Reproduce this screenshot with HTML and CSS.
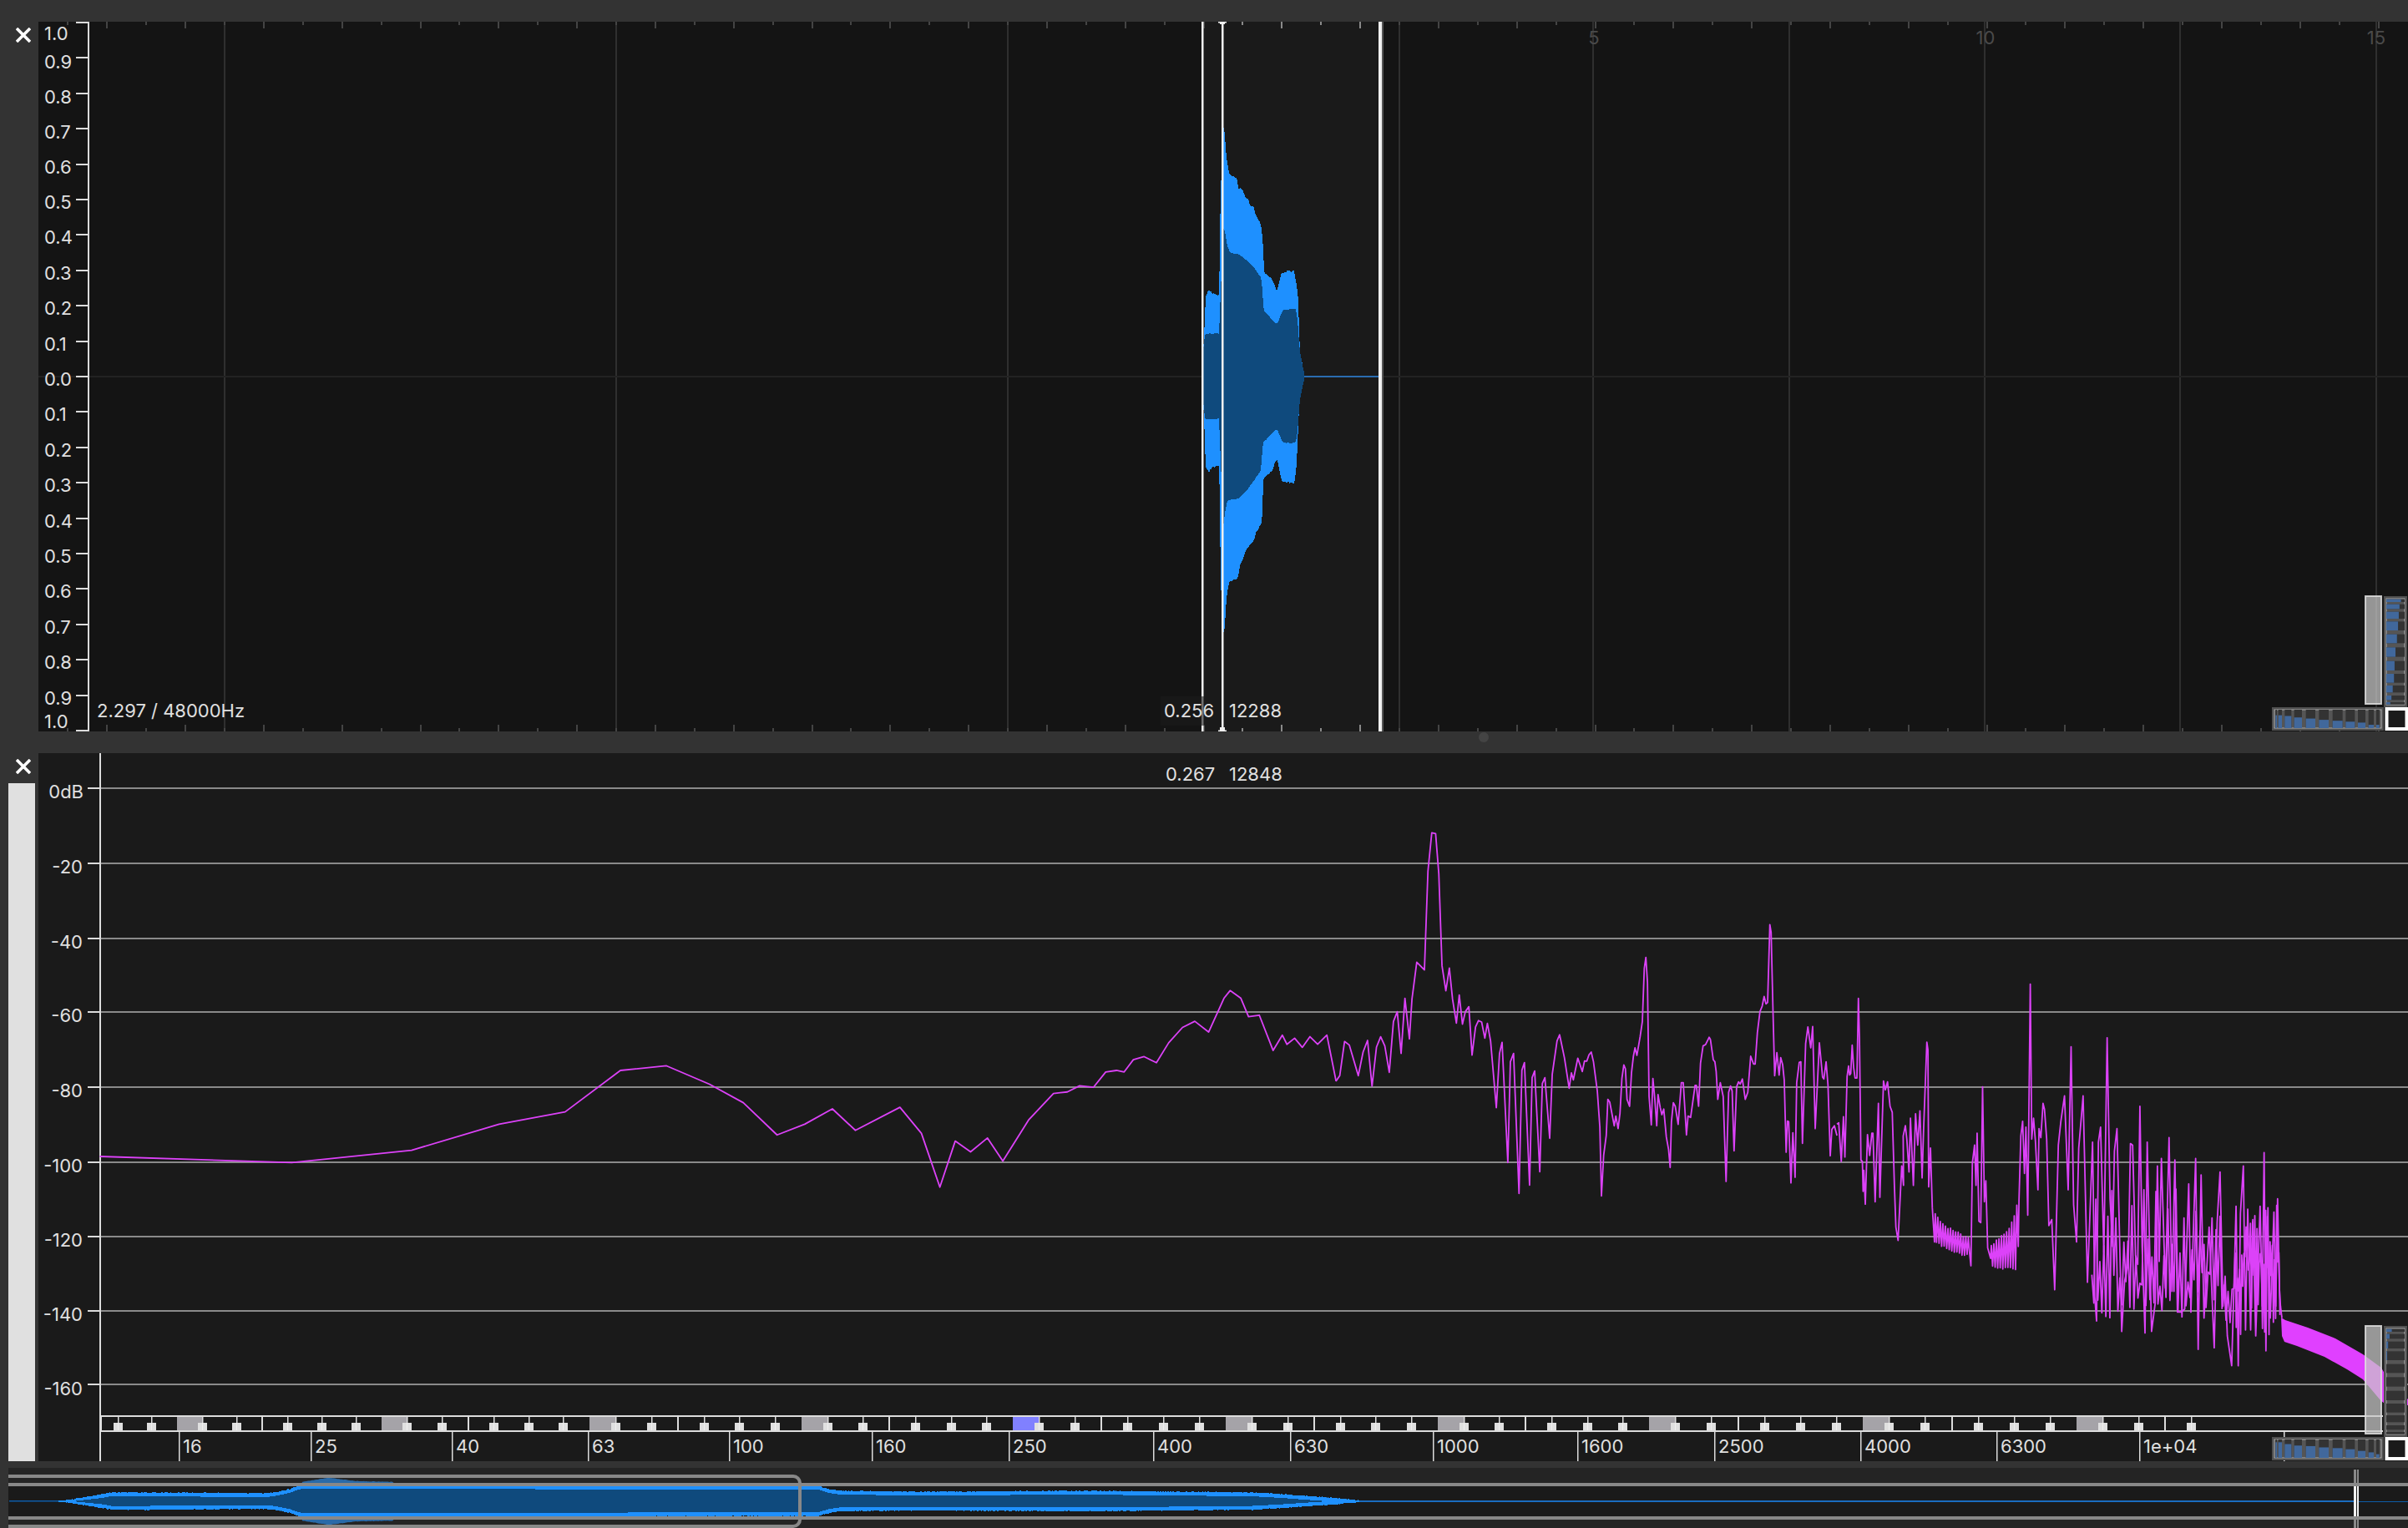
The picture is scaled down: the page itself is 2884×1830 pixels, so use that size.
FILE: index.html
```html
<!DOCTYPE html>
<html lang="en">
<head>
  <meta charset="UTF-8">
  <title>Audio Analyzer</title>
  <link rel="stylesheet" href="styles.css">
</head>
<body>
  <div class="app">
    <div class="topbar"></div>

    <section class="pane pane-wave">
      <div class="side">
        <svg class="close" viewBox="0 0 18 18"><path d="M1 1L17 17M17 1L1 17"/></svg>
      </div>
      <svg class="plot" viewBox="46 26 2838 850">
        <rect class="sel-bg" x="1441" y="26" width="210" height="850"/>
        <g id="waveGrid"></g>
        <g id="waveShape"></g>
        <rect class="mark" x="1439" y="26" width="2.5" height="850"/>
        <rect class="mark" x="1463" y="26" width="2.5" height="850"/>
        <path class="mark" d="M1459 26H1469V27.5H1467V29H1461V27.5H1459ZM1459 876H1469V874.5H1467V871H1461V874.5H1459Z"/>
        <rect class="mark" x="1651" y="26" width="4" height="850"/>
        <rect class="mark-dim" x="1655" y="26" width="2" height="850"/>

        <text class="lbl" x="53" y="48">1.0</text>
        <text class="lbl" x="53" y="82">0.9</text>
        <text class="lbl" x="53" y="124">0.8</text>
        <text class="lbl" x="53" y="166">0.7</text>
        <text class="lbl" x="53" y="208">0.6</text>
        <text class="lbl" x="53" y="250">0.5</text>
        <text class="lbl" x="53" y="292">0.4</text>
        <text class="lbl" x="53" y="335">0.3</text>
        <text class="lbl" x="53" y="377">0.2</text>
        <text class="lbl" x="53" y="420">0.1</text>
        <text class="lbl" x="53" y="462">0.0</text>
        <text class="lbl" x="53" y="504">0.1</text>
        <text class="lbl" x="53" y="547">0.2</text>
        <text class="lbl" x="53" y="589">0.3</text>
        <text class="lbl" x="53" y="632">0.4</text>
        <text class="lbl" x="53" y="674">0.5</text>
        <text class="lbl" x="53" y="716">0.6</text>
        <text class="lbl" x="53" y="759">0.7</text>
        <text class="lbl" x="53" y="801">0.8</text>
        <text class="lbl" x="53" y="844">0.9</text>
        <text class="lbl" x="53" y="872">1.0</text>

        <text class="lbl lbl-dim lbl-mid" x="1909" y="53">5</text>
        <text class="lbl lbl-dim lbl-mid" x="2378" y="53">10</text>
        <text class="lbl lbl-dim lbl-mid" x="2846" y="53">15</text>

        <text class="lbl" x="116" y="859">2.297 / 48000Hz</text>
        <rect class="readout-bg" x="1390" y="834" width="64" height="35"/>
        <text class="lbl" x="1394" y="859">0.256</text>
        <text class="lbl" x="1472" y="859">12288</text>
        <g id="waveMeter"></g>
      </svg>
    </section>

    <div class="divider"><span class="grip"></span></div>

    <section class="pane pane-spec">
      <div class="side">
        <svg class="close" viewBox="0 0 18 18"><path d="M1 1L17 17M17 1L1 17"/></svg>
        <div class="slider"></div>
      </div>
      <svg class="plot" viewBox="46 902 2838 848">
        <g id="specGrid"></g>
        <g id="specKeys"></g>
        <g id="specTrace"></g>

        <text class="lbl lbl-end" x="100" y="956">0dB</text>
        <text class="lbl lbl-end" x="99" y="1046">-20</text>
        <text class="lbl lbl-end" x="99" y="1136">-40</text>
        <text class="lbl lbl-end" x="99" y="1224">-60</text>
        <text class="lbl lbl-end" x="99" y="1314">-80</text>
        <text class="lbl lbl-end" x="99" y="1404">-100</text>
        <text class="lbl lbl-end" x="99" y="1493">-120</text>
        <text class="lbl lbl-end" x="99" y="1582">-140</text>
        <text class="lbl lbl-end" x="99" y="1671">-160</text>

        <text class="lbl" x="219" y="1740">16</text>
        <text class="lbl" x="377" y="1740">25</text>
        <text class="lbl" x="546" y="1740">40</text>
        <text class="lbl" x="709" y="1740">63</text>
        <text class="lbl" x="878" y="1740">100</text>
        <text class="lbl" x="1049" y="1740">160</text>
        <text class="lbl" x="1213" y="1740">250</text>
        <text class="lbl" x="1386" y="1740">400</text>
        <text class="lbl" x="1550" y="1740">630</text>
        <text class="lbl" x="1721" y="1740">1000</text>
        <text class="lbl" x="1894" y="1740">1600</text>
        <text class="lbl" x="2058" y="1740">2500</text>
        <text class="lbl" x="2233" y="1740">4000</text>
        <text class="lbl" x="2396" y="1740">6300</text>
        <text class="lbl" x="2567" y="1740">1e+04</text>

        <text class="lbl" x="1396" y="935">0.267</text>
        <text class="lbl" x="1472" y="935">12848</text>
        <g id="specMeter"></g>
      </svg>
    </section>

    <div class="gap"></div>

    <div class="overview">
      <svg class="plot" viewBox="10 1758 2874 72">
        <rect class="ov-band" x="10" y="1780" width="2874" height="36"/>
        <g id="ovShape"></g>
        <rect class="ov-line" x="10" y="1776" width="2874" height="4"/>
        <rect class="ov-line" x="10" y="1816" width="2874" height="4"/>
        <rect class="ov-frame" x="-20" y="1768" width="978" height="60" rx="8"/>
        <rect class="ov-mark" x="2819" y="1760" width="3" height="70"/>
        <rect class="ov-mark" x="2823" y="1760" width="2" height="70"/>
        <rect class="mark" x="2819" y="1780" width="3" height="36"/>
        <rect class="mark" x="2823" y="1780" width="2" height="36"/>
      </svg>
    </div>
  </div>

  <script src="plot.js"></script>
</body>
</html>
```

FILE: styles.css
```css
html, body {
  margin: 0;
  padding: 0;
  background: #333;
}
.app {
  display: flex;
  flex-direction: column;
  width: 2884px;
  height: 1830px;
  overflow: hidden;
  font-family: Inter, "Liberation Sans", sans-serif;
}
.topbar {
  height: 26px;
  background: #333;
}
.pane {
  display: flex;
}
.pane-wave {
  height: 850px;
  background: #141414;
}
.pane-spec {
  height: 848px;
  background: #1a1a1a;
}
.side {
  display: flex;
  flex-direction: column;
  width: 46px;
  flex-shrink: 0;
  background: #333;
}
.close {
  width: 18px;
  height: 18px;
  margin: 7px 0 0 19px;
  flex-shrink: 0;
}
.close path {
  fill: none;
  stroke: #fff;
  stroke-width: 3.6;
}
.slider {
  flex: 1;
  width: 32px;
  margin: 11px 0 0 10px;
  background: #e0e0e0;
}
.plot {
  display: block;
  flex: 1;
  width: 100%;
  height: 100%;
}
.divider {
  height: 26px;
  background: #333;
}
.grip {
  display: block;
  width: 12px;
  height: 12px;
  margin: 1px 0 0 1771px;
  border-radius: 50%;
  background: #444;
}
.gap {
  height: 8px;
  background: #333;
}
.overview {
  height: 72px;
  padding-left: 10px;
  background: #333;
}
.overview .plot {
  background: #242424;
}

/* plot pieces */
.lbl {
  font-family: Inter, "Liberation Sans", sans-serif;
  font-size: 22px;
  fill: #e0e0e0;
}
.lbl-dim {
  fill: #4a4a4a;
}
.lbl-mid {
  text-anchor: middle;
}
.lbl-end {
  text-anchor: end;
}
.sel-bg {
  fill: #1a1a1a;
}
.grid-v {
  fill: #2f2f2f;
}
.grid-zero {
  fill: #222;
}
.zero-blue {
  fill: #2a6cb0;
}
.tick-dim {
  fill: #444;
}
.tick-sel {
  fill: #8a8a8a;
}
.axis {
  fill: #dcdcdc;
}
.mark {
  fill: #f0f0f0;
}
.mark-dim {
  fill: #555;
}
.readout-bg {
  fill: rgba(26, 26, 26, 0.6);
}
.wave-outer {
  fill: #1e90ff;
  shape-rendering: crispEdges;
}
.wave-inner {
  fill: #0f4a7d;
  shape-rendering: crispEdges;
}

.grid-h {
  fill: #8a8a8a;
}
.key-line {
  fill: #dcdcdc;
}
.key-octave {
  fill: #a5a3a8;
}
.key-active {
  fill: #8080ff;
}
.key-black {
  fill: #e0e0e0;
}
.trace {
  fill: none;
  stroke: #dc42f8;
  stroke-width: 1.8;
  stroke-linejoin: round;
  vector-effect: non-scaling-stroke;
}
.trace-fill {
  fill: #e040ff;
}

.thumb {
  fill: rgba(200, 200, 200, 0.72);
  stroke: rgba(222, 222, 222, 0.85);
  stroke-width: 2;
}
.meter-frame {
  fill: #555;
  stroke: #505050;
  stroke-width: 2;
}
.meter-inner {
  fill: none;
  stroke: #aaa;
  stroke-width: 1;
}
.meter-cell {
  fill: #333;
}
.meter-level {
  fill: #41689c;
}
.corner {
  fill: #1a1a1a;
  stroke: #fff;
  stroke-width: 4;
}

.ov-band {
  fill: #1a1a1a;
}
.ov-line {
  fill: #888;
}
.ov-frame {
  fill: none;
  stroke: #888;
  stroke-width: 4;
}
.ov-mark {
  fill: #888;
}
.ov-bulge {
  fill: #2a6aa8;
}
.ov-thin {
  fill: #0d5ba8;
}
.ov-thick {
  fill: #1a6cc0;
}
```

FILE: plot.js
```js
// repeatable bits of the three plots: ticks, keys, meters, wave and spectrum shapes
let seed = 7;
function rnd() {
  seed = (seed * 16807) % 2147483647;
  return seed / 2147483647;
}

function rect(cls, x, y, w, h) {
  return `<rect class="${cls}" x="${x}" y="${y}" width="${w}" height="${h}"/>`;
}

function valueAt(pts, x) {
  for (let i = 1; i < pts.length; i++) {
    if (x <= pts[i][0]) {
      const a = pts[i - 1], b = pts[i];
      const t = b[0] === a[0] ? 1 : (x - a[0]) / (b[0] - a[0]);
      return a[1] + (b[1] - a[1]) * t;
    }
  }
  return pts[pts.length - 1][1];
}

// filled band between two envelopes, stepped per pixel with a bit of noise
function band(top, bottom, x0, x1, noise) {
  let up = '', down = '';
  for (let x = x0; x <= x1; x += 1) {
    const a = valueAt(top, x) - rnd() * noise;
    const b = valueAt(bottom, x) + rnd() * noise;
    up += `${up ? 'L' : 'M'}${x} ${a.toFixed(1)}`;
    down = `L${x} ${b.toFixed(1)}` + down;
  }
  return up + down + 'Z';
}

function meterV(x, y, levels) {
  const rows = [[110,120],[128,145],[155,180],[190,222],[236,268],[283,317],[332,366],[378,410],[420,445],[456,472],[480,488]];
  let out = rect('meter-frame', x, y, 26, 131) + rect('meter-inner', x + 2, y + 2, 22, 127);
  rows.forEach((r, i) => {
    const cy = y + (r[0] - 102) / 3, ch = (r[1] - r[0]) / 3;
    out += rect('meter-cell', x + 2, cy, 22, ch);
    out += rect('meter-level', x + 2, cy, 22 * levels[i], ch);
  });
  return out;
}

function meterH(x, y, levels) {
  const cols = [[125,130],[135,148],[158,182],[192,220],[234,268],[281,316],[330,366],[377,410],[421,448],[459,478],[487,498]];
  let out = rect('meter-frame', x, y, 132, 26) + rect('meter-inner', x + 2, y + 2, 128, 22);
  cols.forEach((c, i) => {
    const cx = x + (c[0] - 115) / 3, cw = (c[1] - c[0]) / 3;
    const hi = 22 * levels[i];
    out += rect('meter-cell', cx, y + 2, cw, 22);
    out += rect('meter-level', cx, y + 24 - hi, cw, hi);
  });
  return out;
}

function cornerControls(top) {
  let out = rect('thumb', 2833, top + 1, 19, 129);
  out += rect('corner', 2858.5, top + 136, 24, 24);
  return out;
}

/* ---- waveform pane ---- */
function drawWave() {
  let grid = '';
  [268, 737, 1206, 1675, 1907, 2142, 2376, 2610, 2845].forEach(x => {
    grid += rect('grid-v', x, 26, 2, 850);
  });
  grid += rect('grid-zero', 46, 450, 2838, 2);
  for (let k = -4; k <= 55; k++) {
    const x = Math.round(268 + 46.9 * k);
    const tall = Math.abs(k % 2) === 1;
    const h = tall ? 8 : 4;
    const cls = x > 1441 && x < 1651 ? 'tick-sel' : 'tick-dim';
    grid += rect(cls, x, 26, 2, h) + rect(cls, x, 876 - h, 2, h);
  }
  // value axis
  grid += rect('axis', 105, 26, 2, 850);
  for (let k = 0; k <= 20; k++) {
    grid += rect('axis', 91, Math.round(26 + 42.4 * k), 15, 2);
  }
  grid += rect('axis', 91, 874, 15, 2);
  document.getElementById('waveGrid').innerHTML = grid;

  const outerTop = [[1441,420],[1442.3,400],[1444,357],[1447.7,348],[1451.7,353],[1460,355],[1460.5,333],[1461,300],[1462,217],[1464,217],[1465,154],[1466,155],[1467.3,167],[1468.3,183],[1469.3,192],[1470.7,200],[1471.7,207],[1473.3,212],[1476.7,213],[1481.7,215],[1483.3,227],[1488.3,228],[1490,235],[1495,240],[1496.7,247],[1501.7,248],[1503.3,257],[1506.7,263],[1510,270],[1511.7,278],[1512.3,297],[1513,300],[1514,328],[1523,335],[1529.3,350],[1535,328],[1550,325],[1552.7,342],[1555,360],[1556,400],[1557.3,427],[1560,437],[1562,449]];
  const outerBot = [[1441,480],[1442.3,505],[1444,557],[1447.7,565],[1451.7,558],[1460,557],[1461,600],[1462,706],[1464,706],[1465,757],[1466,757],[1467.3,743],[1468.3,725],[1470,707],[1472.7,695],[1480,693],[1483.3,688],[1485,677],[1488.3,668],[1491.7,660],[1496.7,652],[1502.7,643],[1504,637],[1508.3,630],[1511.7,623],[1512.3,600],[1513,572],[1523.3,563],[1529.3,548],[1535,575],[1550,578],[1552.7,560],[1555,507],[1556.7,473],[1560,463],[1562,453]];
  const innerTop = [[1441,420],[1443.3,400],[1460,400],[1462.7,333],[1465,273],[1467.3,278],[1469.3,292],[1470.7,297],[1473.3,303],[1483.3,305],[1493.3,312],[1503.3,323],[1510,333],[1511.7,343],[1513.3,372],[1526.7,387],[1530,387],[1536.7,372],[1551.7,370],[1554,383],[1556.7,420],[1560,438],[1562,447]];
  const innerBot = [[1441,480],[1443.3,502],[1460,501],[1462.7,570],[1465,630],[1467.3,612],[1470,600],[1473.3,598],[1483.3,597],[1493.3,587],[1503.3,573],[1510,563],[1512.7,530],[1526.7,515],[1530,515],[1536.7,530],[1551.7,530],[1554,517],[1556.7,480],[1560,463],[1562,455]];

  let shape = rect('zero-blue', 1562, 450, 89, 2);
  shape += `<path class="wave-outer" d="${band(outerTop, outerBot, 1441, 1562, 2.5)}"/>`;
  shape += `<path class="wave-inner" d="${band(innerTop, innerBot, 1441, 1562, 0.8)}"/>`;
  document.getElementById('waveShape').innerHTML = shape;

  document.getElementById('waveMeter').innerHTML =
    cornerControls(713) +
    meterV(2856, 715, [.8, .72, .68, .64, .58, .5, .45, .42, .35, .28, .22]) +
    meterH(2722, 848, [.7, .7, .66, .58, .52, .45, .4, .35, .3, .18, .18]);
}

/* ---- spectrum pane ---- */
function drawKeys() {
  const starts = [212, 457, 706, 960, 1213, 1468, 1722, 1975, 2231, 2487];
  const blacks = [30, 71, 132, 173, 214];
  let out = '';
  starts.forEach((s, i) => {
    const next = starts[i + 1] || s + 254;
    const k = (next - s) / 245;
    out += rect(i === 4 ? 'key-active' : 'key-octave', s, 1696, Math.round(30 * k), 18);
    out += rect('key-line', s + Math.round(101 * k), 1695, 2, 19);
    if (i === 0) out += rect('key-line', 120, 1695, 2, 19);
    blacks.forEach(b => {
      const x = s + Math.round(b * k);
      if (x > 2640) return;
      out += rect('key-line', x, 1695, 1.5, 10);
      out += rect('key-black', x - 5, 1704, 11, 10);
      out += rect('mark', x, 1704, 1, 10);
    });
  });
  [141, 181].forEach(x => {
    out += rect('key-line', x, 1695, 1.5, 10);
    out += rect('key-black', x - 5, 1704, 11, 10);
    out += rect('mark', x, 1704, 1, 10);
  });
  out += rect('key-line', 120, 1695, 2734, 2);
  out += rect('key-line', 120, 1713, 2734, 2);
  document.getElementById('specKeys').innerHTML = out;
}

function poly(cls, transform, pts) {
  const d = pts.map(p => p.join(',')).join(' ');
  return `<g transform="${transform}"><polyline class="${cls}" points="${d}"/></g>`;
}

function comb(x0, x1, step, top, bottom) {
  const pts = [];
  let up = true;
  for (let x = x0; x <= x1; x += step / 2) {
    const env = up ? top : bottom;
    pts.push([x, valueAt(env, x) + rnd() * 10 - 5]);
    up = !up;
  }
  return pts;
}

function drawSpectrum() {
  let grid = '';
  [944, 1034, 1124, 1212, 1302, 1392, 1481, 1570, 1658].forEach(y => {
    grid += rect('grid-h', 121, y - 1, 2763, 2);
    grid += rect('axis', 105, y - 1, 15, 2);
  });
  grid += rect('axis', 119, 902, 2, 848);
  [214, 372, 541, 704, 873, 1044, 1208, 1381, 1545, 1716, 1889, 2053, 2228, 2391, 2562, 2735].forEach(x => {
    grid += rect('axis', x, 1714, 1.5, 36);
  });
  document.getElementById('specGrid').innerHTML = grid;
  drawKeys();

  // low end, traced on the shrunk picture
  const low = [[65,753],[190,757],[268,749],[325,732],[368,724],[404,697],[434,694],[462,706],[484,718],[506,739],[524,732],[542,722],[557,736],[586,721],[600,738],[612,773],[622,743],[632,750],[643,741],[653,756],[670,729],[686,712],[695,711],[703,707],[712,708],[720,698],[727,697],[732,698],[738,690],[745,688],[753,692],[761,679],[770,669],[778,665],[787,672],[797,650],[801,645],[808,650],[813,662],[820,661],[829,684],[835,674],[838,680],[843,676],[848,682],[853,675],[858,680],[864,674],[870,704]];

  const mid = [[0,1035],[12,1015],[27,892],[42,905],[70,1015],[85,930],[99,888],[113,1053],[127,912],[140,875],[153,908],[167,1003],[180,820],[192,785],[204,935],[216,737],[230,883],[238,740],[253,607],[277,635],[288,280],[300,142],[312,145],[322,290],[332,620],[344,710],[355,628],[365,740],[377,826],[386,725],[396,830],[405,785],[416,767],[426,941],[437,840],[446,817],[456,822],[466,880],[474,827],[484,890],[502,1130],[512,935],[520,895],[538,1327],[546,965],[556,935],[573,1438],[582,995],[590,968],[606,1408],[614,1022],[622,998],[638,1360],[646,1043],[654,1022],[669,1240],[677,1010],[692,890],[700,868],[715,950],[730,1060],[737,1005],[743,1030],[757,952],[771,1000],[778,962],[785,963],[792,940],[799,930],[806,965],[818,1070],[826,1200],[831,1447],[838,1300],[846,1230],[851,1100],[857,1110],[871,1195],[876,1160],[883,1205],[889,1150],[895,1025],[901,976],[906,990],[911,1100],[919,1125],[925,1005],[931,945],[936,915],[942,942],[952,875],[959,820],[965,630],[970,590],[975,680],[980,1090],[987,1192],[992,1025],[998,1100],[1004,1195],[1008,1083],[1015,1130],[1020,1155],[1026,1135],[1034,1235],[1041,1280],[1046,1345],[1050,1180],[1056,1112],[1062,1125],[1071,1190],[1081,1040],[1087,1040],[1097,1228],[1102,1160],[1110,1165],[1124,1050],[1128,1050],[1135,1125],[1141,970],[1149,908],[1157,903],[1168,877],[1172,885],[1181,958],[1186,965],[1190,1000],[1195,1100],[1203,1040],[1212,1090],[1221,1395],[1229,1075],[1235,1052],[1240,1070],[1246,1285],[1254,1055],[1260,1037],[1265,1045],[1272,1027],[1281,1100],[1289,1075],[1298,945],[1307,973],[1312,973],[1319,860],[1327,785],[1334,765],[1340,730],[1346,757],[1351,752],[1358,472],[1362,500],[1368,790],[1373,1015],[1380,932],[1387,1013],[1392,950],[1398,975],[1403,1030],[1409,1290],[1413,1178],[1417,1180],[1424,1400],[1430,1220],[1437,1380],[1442,1040],[1450,967],[1455,965],[1460,1258],[1470,900],[1477,840],[1486,915],[1492,838],[1500,1205],[1513,897],[1523,1020],[1527,1027],[1534,965],[1540,1050],[1547,1303],[1552,1208],[1560,1195],[1568,1230]];

  const highA = [[0,690],[5,685],[12,815],[18,665],[22,800],[28,530],[32,495],[35,525],[38,520],[42,425],[46,500],[50,535],[55,535],[59,268],[62,400],[64,600],[66,810],[70,815],[72,915],[74,845],[78,958],[84,725],[90,795],[96,720],[99,720],[105,950],[114,620],[118,935],[128,545],[133,575],[139,548],[146,630],[152,650],[158,900],[162,1035],[168,1080],[178,830],[183,895],[182,730],[188,695],[192,740],[198,850],[202,670],[210,895],[216,655],[222,760],[228,645],[234,870],[238,710],[247,415],[250,440],[252,900],[257,770],[262,970],[268,1085]];
  const combB = comb(270, 366, 7, [[270,990],[290,1025],[340,1060],[368,1075]], [[270,1085],[300,1105],[340,1128],[368,1128]]);
  const highC = [[368,1165],[372,820],[378,760],[382,895],[385,720],[390,1015],[395,1020],[400,565],[405,950],[409,880],[414,1105],[422,1140]];
  const combD = comb(424, 496, 7, [[424,1100],[440,1080],[470,1050],[490,985],[496,950]], [[424,1170],[496,1175]]);
  const highE = [[498,1100],[500,945],[505,730],[510,680],[515,855],[519,700],[524,995],[531,220],[535,740],[540,670],[545,745],[552,910],[555,705],[560,735],[566,620],[570,640],[576,740],[582,1030],[590,1010],[598,1245],[608,760],[615,680],[625,595],[635,910],[643,430],[650,960],[658,1085],[664,770],[676,595],[688,1220],[702,750],[708,1270],[713,1350],[718,750],[724,700],[733,1120],[742,400],[750,940],[757,1100],[762,780],[769,705],[775,1010],[782,1385],[790,1215],[800,1160],[806,755],[812,760],[820,1130],[826,1160],[832,630],[838,1100],[846,1390],[852,750],[864,1385],[874,1290],[880,830],[885,1150],[891,805],[902,1240],[912,735],[920,1250],[928,810],[935,1320],[945,1320],[955,1310],[966,890],[972,1320],[985,805],[992,1445],[1000,860],[1008,1340],[1022,1035],[1036,1440],[1044,1020],[1052,850],[1060,1300],[1066,1200],[1072,1400],[1084,1500],[1090,1240],[1096,965],[1102,1500],[1108,990],[1116,830],[1122,1380],[1128,975],[1136,1380],[1142,1010],[1150,1400],[1162,965],[1168,1300],[1173,785],[1178,1450],[1182,1000],[1190,1340],[1200,985],[1205,1300],[1210,940],[1215,1240],[1218,1300],[1222,1340]];
  const high = highA.concat(combB, highC, combD, highE);

  // the busy part of the top end, thickens the traced line
  const dense = [];
  let up = true;
  for (let x = 700; x < 1218; x += x > 1090 ? 3 : 5.5) {
    let y;
    if (x > 1090) y = up ? 960 + rnd() * 260 : 1120 + rnd() * 280;
    else if (x > 1055) y = up ? 1200 + rnd() * 80 : 1300 + rnd() * 110;
    else y = up ? 900 + rnd() * 340 : 1180 + rnd() * 160;
    dense.push([x, y]);
    up = !up;
  }

  const hiT = 'translate(2200 1100) scale(.4362 .3571)';
  let out = poly('trace', 'scale(1.8393)', low);
  out += poly('trace', 'translate(1600 950) scale(.3827 .3333)', mid);
  out += poly('trace', hiT, high);
  out += poly('trace', hiT, dense);

  const tail = 'M2732 1578 L2737 1581 L2764 1590 L2797 1603 L2830 1622 L2852 1638 L2856 1645 L2884 1676 L2884 1683 L2856 1681 L2851 1677 L2830 1652 L2811 1640 L2784 1625 L2751 1612 L2736 1607 L2733 1600 Z';
  out += `<path class="trace-fill" d="${tail}"/>`;
  document.getElementById('specTrace').innerHTML = out;

  document.getElementById('specMeter').innerHTML =
    cornerControls(1587) +
    meterV(2856, 1589, [.3, .18, .1, .05, 0, 0, 0, 0, 0, 0, 0]) +
    meterH(2722, 1722, [.85, .85, .75, .67, .64, .57, .53, .47, .38, .3, .2]);
}

/* ---- overview strip ---- */
function drawOverview() {
  const topEnv = [[70,1798],[87,1796],[123,1790],[133,1788],[173,1788],[320,1789],[333,1787],[347,1784],[357,1780],[363,1779],[980,1780],[993,1784],[1006,1786],[1100,1787],[1300,1786],[1500,1788],[1535,1790],[1590,1794],[1628,1797.5]];
  const botEnv = topEnv.map(p => [p[0], 1798 + (1798 - p[1]) * 0.95]);
  const innerTop = topEnv.map(p => [p[0], Math.min(1798, p[1] + 4)]);
  const innerBot = botEnv.map(p => [p[0], Math.max(1798, p[1] - 4)]);
  const bulgeTop = [[360,1782],[362,1775],[393,1770],[426,1774],[470,1775],[480,1782]];
  const bulgeBot = bulgeTop.map(p => [p[0], 1798 + (1798 - p[1])]);

  let out = rect('ov-thin', 11, 1797, 60, 1.5);
  out += rect('ov-thick', 1628, 1797, 1192, 2) + rect('ov-thin', 2825, 1798, 59, 1);
  out += `<path class="ov-bulge" d="${band(bulgeTop, bulgeBot, 360, 480, 0.5)}"/>`;
  out += `<path class="wave-outer" d="${band(topEnv, botEnv, 70, 1628, 1.2)}"/>`;
  out += `<path class="wave-inner" d="${band(innerTop, innerBot, 70, 1628, 0)}"/>`;
  document.getElementById('ovShape').innerHTML = out;
}

drawWave();
drawSpectrum();
drawOverview();
```
